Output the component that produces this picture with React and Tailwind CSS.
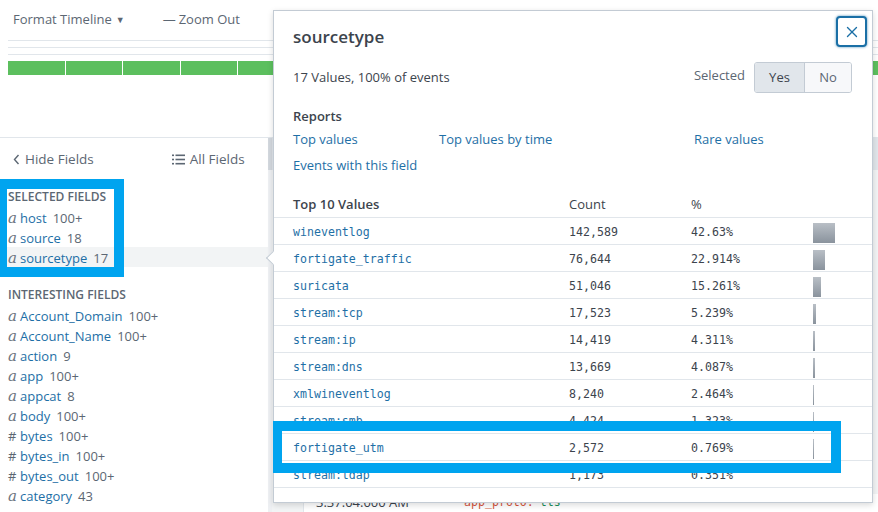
import React from 'react';
import { X } from 'lucide-react';

const selectedFields = [
  { type: 'a', name: 'host', count: '100+' },
  { type: 'a', name: 'source', count: '18' },
  { type: 'a', name: 'sourcetype', count: '17', active: true },
];

const interestingFields = [
  { type: 'a', name: 'Account_Domain', count: '100+' },
  { type: 'a', name: 'Account_Name', count: '100+' },
  { type: 'a', name: 'action', count: '9' },
  { type: 'a', name: 'app', count: '100+' },
  { type: 'a', name: 'appcat', count: '8' },
  { type: 'a', name: 'body', count: '100+' },
  { type: '#', name: 'bytes', count: '100+' },
  { type: '#', name: 'bytes_in', count: '100+' },
  { type: '#', name: 'bytes_out', count: '100+' },
  { type: 'a', name: 'category', count: '43' },
];

const topValues = [
  { value: 'wineventlog', count: '142,589', pct: '42.63%', bar: 22 },
  { value: 'fortigate_traffic', count: '76,644', pct: '22.914%', bar: 12 },
  { value: 'suricata', count: '51,046', pct: '15.261%', bar: 8 },
  { value: 'stream:tcp', count: '17,523', pct: '5.239%', bar: 3 },
  { value: 'stream:ip', count: '14,419', pct: '4.311%', bar: 2 },
  { value: 'stream:dns', count: '13,669', pct: '4.087%', bar: 2 },
  { value: 'xmlwineventlog', count: '8,240', pct: '2.464%', bar: 1 },
  { value: 'stream:smb', count: '4,424', pct: '1.323%', bar: 1 },
  { value: 'fortigate_utm', count: '2,572', pct: '0.769%', bar: 1 },
  { value: 'stream:ldap', count: '1,173', pct: '0.351%', bar: 0 },
];

const sans = { fontFamily: '"Open Sans", "Liberation Sans", sans-serif' };
const mono = { fontFamily: '"DejaVu Sans Mono", "Liberation Mono", monospace' };

const FieldRow = ({ field }) => (
  <div
    className={`h-5 flex items-center pl-2 pt-[3px] text-[13px] ${field.active ? 'bg-[#f2f4f5]' : ''}`}
  >
    {field.type === 'a' ? (
      <span className="w-3 text-[15px] italic text-[#6b7480]" style={{ fontFamily: '"DejaVu Serif", "Liberation Serif", serif' }}>
        a
      </span>
    ) : (
      <span className="w-3 text-[13px] text-[#5c6773]">#</span>
    )}
    <span className="text-[#1e6fa6]">{field.name}</span>
    <span className="ml-[6px] text-[#5c6773]">{field.count}</span>
  </div>
);

const Popup = () => (
  <div className="absolute left-[273px] top-[10px] w-[600px] h-[493px] bg-white border border-[#c3cbd4] shadow-[0_2px_6px_rgba(0,0,0,0.15)] text-[#3c444d]">
    {/* caret */}
    <div className="absolute -left-[6px] top-[242px] w-[10px] h-[10px] rotate-45 bg-white border-l border-b border-[#c3cbd4]" />

    <button className="absolute right-[5px] top-[5px] w-[31px] h-[31px] flex items-center justify-center rounded-[4px] border-2 border-[#1a6fa6] shadow-[0_0_2px_1px_rgba(26,111,166,0.35)] text-[#1a6fa6] bg-white">
      <X size={18} strokeWidth={1.8} />
    </button>

    <div className="pl-[19px] pr-5 pt-[15px]">
      <div className="text-[17px] leading-[22px] font-semibold text-[#3c444d]">sourcetype</div>

      <div className="mt-[14px] h-[31px] flex items-center justify-between">
        <span className="text-[13px]">17 Values, 100% of events</span>
        <div className="flex items-center">
          <span className="text-[13px] text-[#5c6773] mr-[9px] -mt-[3px]">Selected</span>
          <div className="flex h-[31px] border border-[#c3cbd4] rounded-[3px] overflow-hidden text-[13px]">
            <span className="w-[50px] flex items-center justify-center bg-[#e1e6eb] border-r border-[#c3cbd4] text-[#3c444d]">Yes</span>
            <span className="w-[46px] flex items-center justify-center bg-[#f7f8fa] text-[#5c6773]">No</span>
          </div>
        </div>
      </div>

      <div className="mt-[13px] text-[13px] leading-5 font-semibold">Reports</div>
      <div className="grid grid-cols-[146px_255px_1fr] text-[13px] text-[#1e6fa6] pt-[1px]">
        <div className="h-[26px] flex items-center">Top values</div>
        <div className="h-[26px] flex items-center">Top values by time</div>
        <div className="h-[26px] flex items-center">Rare values</div>
        <div className="h-[26px] flex items-center col-span-3">Events with this field</div>
      </div>
    </div>

    <div className="mt-[12px]">
      <div className="grid grid-cols-[276px_122px_122px_1fr] h-[26px] items-center text-[13px] pl-[19px] pt-[1px]">
        <span className="font-semibold">Top 10 Values</span>
        <span>Count</span>
        <span>%</span>
        <span />
      </div>
      {topValues.map((row) => (
        <div
          key={row.value}
          className="grid grid-cols-[276px_122px_122px_1fr] h-[27px] items-center border-t border-[#e1e6eb] pl-[19px] pt-[3px] text-[11.6px]"
          style={mono}
        >
          <span className="text-[#1e6fa6]">{row.value}</span>
          <span className="text-[#3c444d]">{row.count}</span>
          <span className="text-[#3c444d]">{row.pct}</span>
          <span className="h-[20px] flex items-center">
            {row.bar > 0 && (
              <span
                className="block h-[20px] bg-gradient-to-b from-[#b9bfc6] to-[#8a939d]"
                style={{ width: row.bar }}
              />
            )}
          </span>
        </div>
      ))}
      <div className="border-t border-[#e1e6eb]" />
    </div>
  </div>
);

export default function App() {
  return (
    <div className="relative w-[878px] h-[512px] overflow-hidden bg-white" style={sans}>
      {/* timeline header */}
      <div className="h-[138px] border-b border-[#e1e6eb]">
        <div className="h-[40px] flex items-center text-[13px] text-[#5c6773]">
          <span className="ml-[13px] flex items-center">
            Format Timeline
            <span className="ml-[4px] text-[9px]">▼</span>
          </span>
          <span className="ml-[38px] flex items-center">
            <span className="mr-[3px]">—</span>Zoom Out
          </span>
        </div>
        <div className="ml-2 border-t border-[#e1e6eb] h-[7px]" />
        <div className="ml-2 border-t border-[#e1e6eb] h-[7px]" />
        <div className="ml-2 border-t border-[#e1e6eb] h-[7px]" />
        <div className="ml-2 flex gap-px h-[14px]">
          {Array.from({ length: 16 }, (_, i) => (
            <div key={i} className="w-[56.5px] shrink-0 bg-[#5cbf5e]" />
          ))}
        </div>
      </div>

      <div className="flex h-[374px]">
        {/* sidebar */}
        <div className="w-[268px] relative">
          <div className="h-[42px] flex items-center text-[13.5px] text-[#5c6773]">
            <span className="ml-[13px] flex items-center">
              <svg width="7" height="11" viewBox="0 0 7 11" className="mr-[5px]">
                <path d="M5.5 1 L1.5 5.5 L5.5 10" fill="none" stroke="#5c6773" strokeWidth="1.4" />
              </svg>
              Hide Fields
            </span>
            <span className="ml-[78px] flex items-center">
              <svg width="13" height="11" viewBox="0 0 13 11" className="mr-[5px]">
                <g fill="#5c6773">
                  <rect x="0" y="0.5" width="2" height="1.6" />
                  <rect x="3.5" y="0.5" width="9.5" height="1.6" />
                  <rect x="0" y="4.7" width="2" height="1.6" />
                  <rect x="3.5" y="4.7" width="9.5" height="1.6" />
                  <rect x="0" y="8.9" width="2" height="1.6" />
                  <rect x="3.5" y="8.9" width="9.5" height="1.6" />
                </g>
              </svg>
              All Fields
            </span>
          </div>
          <div className="pt-[7px]">
            <div className="h-5 flex items-center pl-2 text-[12px] font-semibold text-[#5c6773] uppercase">Selected Fields</div>
            {selectedFields.map((f) => (
              <FieldRow key={f.name} field={f} />
            ))}
          </div>
          <div className="pt-[18px]">
            <div className="h-5 flex items-center pl-2 text-[12px] font-semibold text-[#5c6773] uppercase">Interesting Fields</div>
            {interestingFields.map((f) => (
              <FieldRow key={f.name} field={f} />
            ))}
          </div>
        </div>

        {/* scrollbar */}
        <div className="w-[4px] bg-[#eef0f3] flex flex-col">
          <div className="h-[32px] bg-[#d3d8de]" />
        </div>

        {/* events area */}
        <div className="flex-1 bg-[#f2f4f5] flex flex-col">
          <div className="h-[32px] bg-[#e1e6eb]" />
          <div className="flex-1" />
          <div className="ml-[31px] h-[18px] bg-white border-l border-[#e1e6eb] flex items-center">
            <span className="ml-[12px] text-[13px] text-[#3c444d]">3:37:04.000 AM</span>
            <span className="ml-[55px] text-[11.6px] text-[#d6563c]" style={mono}>app_proto:</span>
            <span className="ml-[6px] text-[11.6px] text-[#1a8f5a]" style={mono}>tls</span>
          </div>
        </div>
      </div>

      {/* annotation boxes */}
      <div className="absolute -left-[3px] top-[179px] w-[127px] h-[98px] border-[10px] border-[#00a4ef]" />

      <Popup />

      <div className="absolute left-[273px] top-[421px] w-[568px] h-[52px] border-[10px] border-l-[9px] border-[#00a4ef]" />
    </div>
  );
}
